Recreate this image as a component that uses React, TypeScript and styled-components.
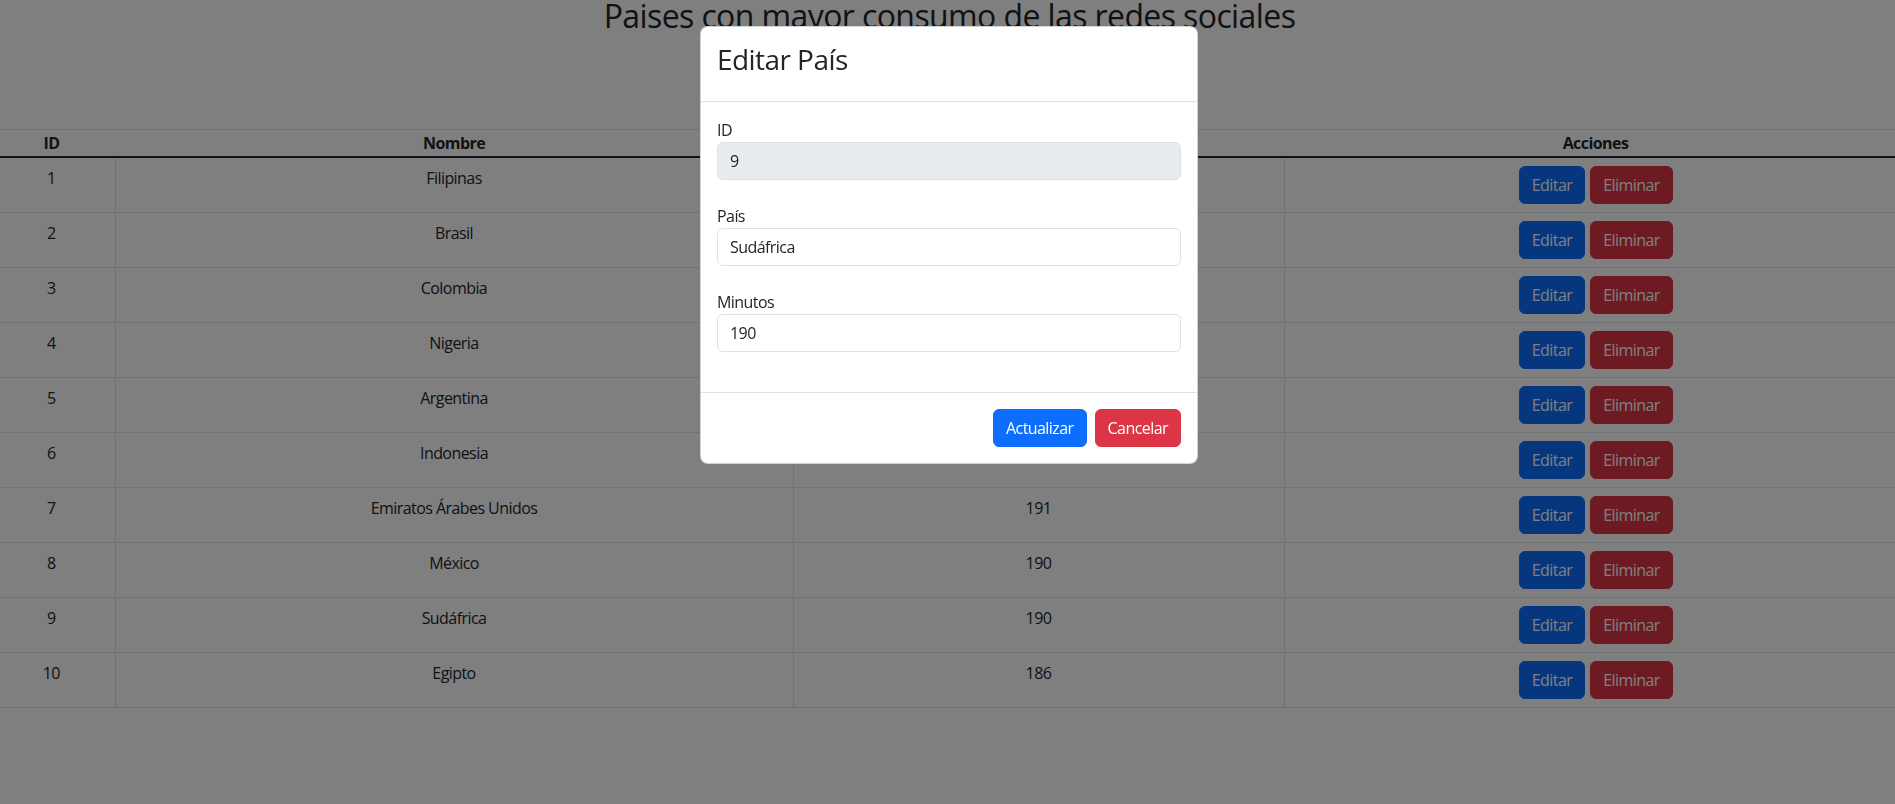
import React from "react";
import styled, { createGlobalStyle, css } from "styled-components";

const GlobalStyle = createGlobalStyle`
  html, body {
    margin: 0;
    padding: 0;
    overflow-x: hidden;
    background: #ffffff;
  }
  body {
    font-family: "Open Sans", "Noto Sans", Arial, sans-serif;
    font-size: 16px;
    line-height: 1.5;
    color: #212529;
    letter-spacing: -0.035em;
  }
  *, *::before, *::after { box-sizing: border-box; }
`;

const Page = styled.div`
  position: relative;
  min-height: 804px;
`;

const Title = styled.h1`
  margin: 0 0 97px;
  padding-left: 4px;
  text-align: center;
  font-size: 32px;
  line-height: 32px;
  font-weight: 400;
  letter-spacing: -0.6px;
  color: #212529;
`;

const TableRow = styled.div`
  margin: 0 -12px;
`;

const Table = styled.table`
  width: 100%;
  border-collapse: collapse;
  table-layout: fixed;
`;

const HeadCell = styled.th<{ $w: number }>`
  width: ${(p) => p.$w}px;
  padding: 1px 8px;
  font-weight: 700;
  text-align: center;
  line-height: 24px;
  border-top: 1px solid #dee2e6;
  border-bottom: 2px solid #212529;
`;

const Cell = styled.td`
  padding: 8px;
  text-align: center;
  vertical-align: top;
  line-height: 24px;
  border-bottom: 1px solid #dee2e6;
  & + & {
    border-left: 1px solid #dee2e6;
  }
`;

const Actions = styled.div`
  display: inline-flex;
  gap: 5px;
`;

const Button = styled.button<{ $variant: "primary" | "danger" }>`
  display: inline-block;
  padding: 6px 12px;
  font-family: inherit;
  font-size: 16px;
  line-height: 24px;
  letter-spacing: inherit;
  color: #ffffff;
  border-radius: 6px;
  cursor: pointer;
  ${(p) =>
    p.$variant === "primary"
      ? css`
          background: #0d6efd;
          border: 1px solid #0d6efd;
        `
      : css`
          background: #dc3545;
          border: 1px solid #dc3545;
        `}
`;

const Backdrop = styled.div`
  position: fixed;
  inset: 0;
  background: rgba(0, 0, 0, 0.5);
`;

const ModalLayer = styled.div`
  position: fixed;
  inset: 0;
  padding-left: 3px;
`;

const Dialog = styled.div`
  width: 498px;
  margin: 26px auto 0;
  background: #ffffff;
  border: 1px solid rgba(0, 0, 0, 0.175);
  border-radius: 8px;
`;

const ModalHeader = styled.div`
  padding: 16px;
  border-bottom: 1px solid #dee2e6;
`;

const ModalTitle = styled.h3`
  margin: 0 0 8px;
  font-size: 28px;
  line-height: 1.2;
  font-weight: 400;
`;

const ModalBody = styled.div`
  padding: 16px;
`;

const Group = styled.div`
  margin-bottom: 24px;
`;

const Label = styled.label`
  display: block;
  font-size: 16px;
  line-height: 24px;
`;

const Input = styled.input`
  display: block;
  width: 100%;
  height: 38px;
  padding: 6px 12px;
  font-family: inherit;
  font-size: 16px;
  line-height: 24px;
  letter-spacing: inherit;
  color: #212529;
  background: #ffffff;
  border: 1px solid #dee2e6;
  border-radius: 6px;
  &:disabled {
    background: #e9ecef;
    color: #212529;
    opacity: 1;
  }
`;

const ModalFooter = styled.div`
  display: flex;
  justify-content: flex-end;
  gap: 8px;
  padding: 16px;
  border-top: 1px solid #dee2e6;
`;

const rows = [
  { id: 1, nombre: "Filipinas", minutos: 241 },
  { id: 2, nombre: "Brasil", minutos: 225 },
  { id: 3, nombre: "Colombia", minutos: 216 },
  { id: 4, nombre: "Nigeria", minutos: 216 },
  { id: 5, nombre: "Argentina", minutos: 209 },
  { id: 6, nombre: "Indonesia", minutos: 197 },
  { id: 7, nombre: "Emiratos Árabes Unidos", minutos: 191 },
  { id: 8, nombre: "México", minutos: 190 },
  { id: 9, nombre: "Sudáfrica", minutos: 190 },
  { id: 10, nombre: "Egipto", minutos: 186 },
];

export default function App() {
  return (
    <Page>
      <GlobalStyle />
      <Title>Paises con mayor consumo de las redes sociales</Title>
      <TableRow>
        <Table>
          <thead>
            <tr>
              <HeadCell $w={127}>ID</HeadCell>
              <HeadCell $w={678}>Nombre</HeadCell>
              <HeadCell $w={491}>Minutos</HeadCell>
              <HeadCell $w={623}>Acciones</HeadCell>
            </tr>
          </thead>
          <tbody>
            {rows.map((r) => (
              <tr key={r.id}>
                <Cell>{r.id}</Cell>
                <Cell>{r.nombre}</Cell>
                <Cell>{r.minutos}</Cell>
                <Cell>
                  <Actions>
                    <Button $variant="primary">Editar</Button>
                    <Button $variant="danger">Eliminar</Button>
                  </Actions>
                </Cell>
              </tr>
            ))}
          </tbody>
        </Table>
      </TableRow>
      <Backdrop />
      <ModalLayer>
        <Dialog>
          <ModalHeader>
            <ModalTitle>Editar País</ModalTitle>
          </ModalHeader>
          <ModalBody>
            <Group>
              <Label>ID</Label>
              <Input defaultValue="9" disabled />
            </Group>
            <Group>
              <Label>País</Label>
              <Input defaultValue="Sudáfrica" />
            </Group>
            <Group>
              <Label>Minutos</Label>
              <Input defaultValue="190" />
            </Group>
          </ModalBody>
          <ModalFooter>
            <Button $variant="primary">Actualizar</Button>
            <Button $variant="danger">Cancelar</Button>
          </ModalFooter>
        </Dialog>
      </ModalLayer>
    </Page>
  );
}
